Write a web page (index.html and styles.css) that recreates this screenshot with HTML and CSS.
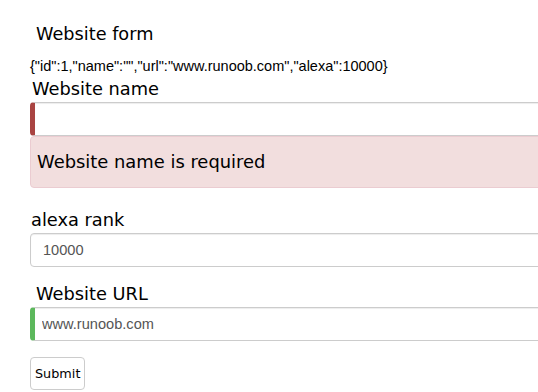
FILE: index.html
```html
<!DOCTYPE html>
<html lang="en">
<head>
  <meta charset="UTF-8" />
  <meta name="viewport" content="width=device-width, initial-scale=1.0" />
  <title>Website form</title>
  <link rel="stylesheet" href="styles.css">
</head>
<body>
  <div class="page">
    <h3 class="title">Website form</h3>
    <p class="json">{"id":1,"name":"","url":"www.runoob.com","alexa":10000}</p>

    <div class="group name">
      <label class="label">Website name</label>
      <input class="field invalid" type="text" value="">
      <div class="alert">Website name is required</div>
    </div>

    <div class="group rank">
      <label class="label tight">alexa rank</label>
      <input class="field" type="text" value="10000">
    </div>

    <div class="group url">
      <label class="label indent">Website URL</label>
      <input class="field valid" type="text" value="www.runoob.com">
    </div>

    <button class="submit">Submit</button>
  </div>
</body>
</html>
```

FILE: styles.css
```css
body {
  margin: 0;
  font-family: "DejaVu Sans", Verdana, sans-serif;
  color: #000;
  background: #fff;
  overflow: hidden;
}
.page {
  padding: 22px 0 0 30px;
  width: 560px;
}
.title {
  margin: 0 0 0 6px;
  font-size: 17.7px;
  font-weight: normal;
  line-height: 24px;
}
.json {
  margin: 12px 0 0 0;
  font-family: "Liberation Sans", Arial, sans-serif;
  font-size: 14.5px;
  line-height: 16px;
}
.label {
  display: block;
  margin-left: 2px;
  font-size: 17.8px;
  line-height: 22px;
}
.label.tight { margin-left: 1px; }
.label.indent { margin-left: 6px; }
.name {
  margin-top: 4px;
}
.field {
  display: block;
  box-sizing: border-box;
  width: 100%;
  height: 34px;
  margin-top: 2px;
  padding: 6px 12px;
  border: 1px solid #ccc;
  border-radius: 4px;
  font-family: "Liberation Sans", Arial, sans-serif;
  font-size: 14.6px;
  color: #555;
  background: #fff;
  box-shadow: inset 0 1px 1px rgba(0, 0, 0, 0.075);
}
.field.invalid {
  border-left: 5px solid #a94442;
  padding-left: 7px;
}
.field.valid {
  border-left: 5px solid #5cb85c;
  padding-left: 7px;
}
.alert {
  box-sizing: border-box;
  height: 52px;
  padding: 14px 6px;
  background: #f2dede;
  border: 1px solid #ebccd1;
  border-radius: 4px;
  font-size: 17.9px;
  line-height: 22px;
  color: #000;
}
.rank {
  margin-top: 21px;
}
.url {
  margin-top: 16px;
}
.submit {
  display: block;
  margin-top: 16px;
  height: 33px;
  padding: 0 4px;
  background: #fff;
  border: 1px solid #ccc;
  border-radius: 4px;
  font-family: "DejaVu Sans", Verdana, sans-serif;
  font-size: 12.8px;
  color: #000;
}
```
